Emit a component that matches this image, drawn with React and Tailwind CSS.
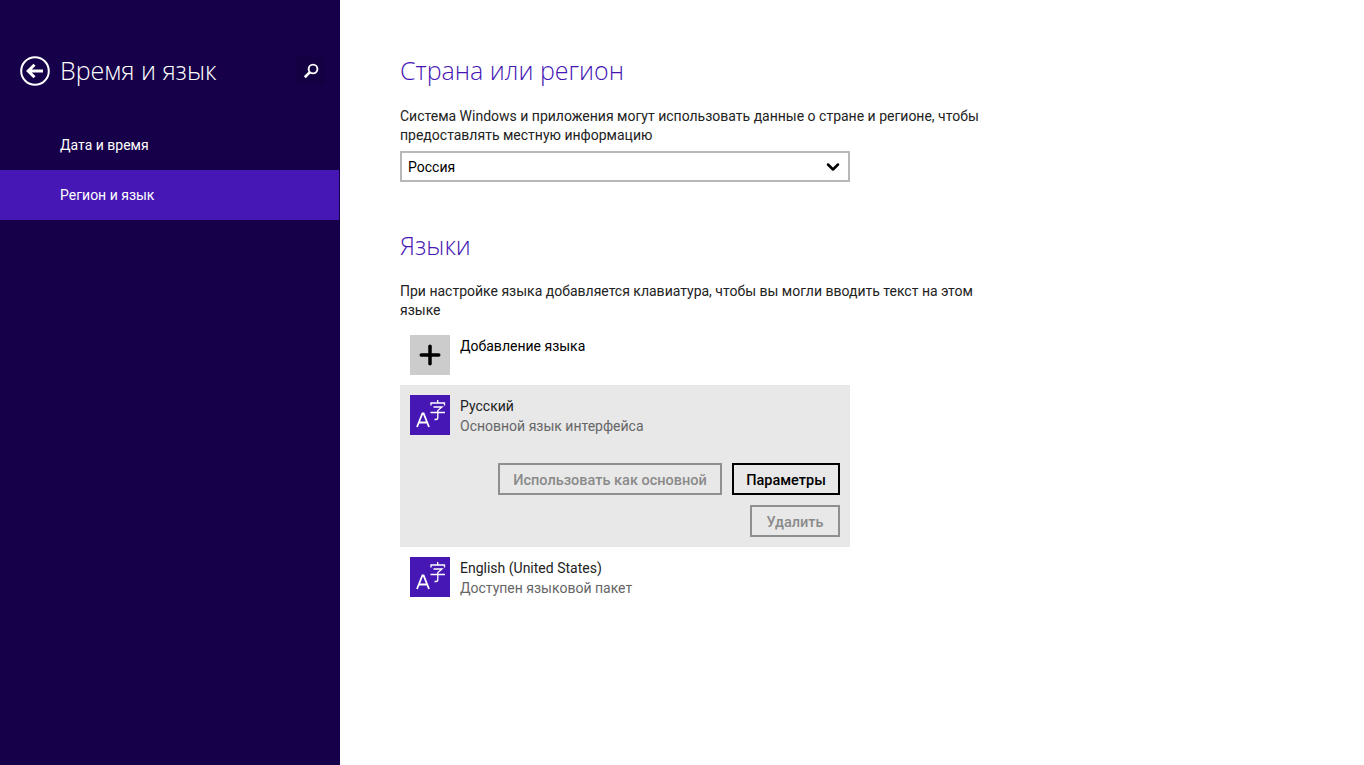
import { Plus, ChevronDown } from 'lucide-react'

function LangIcon() {
  return (
    <div className="relative h-10 w-10 shrink-0 bg-[#4617b4] text-white">
      <svg viewBox="0 0 40 40" className="h-10 w-10" fill="none" stroke="white" strokeWidth="1.3">
        <path d="M7 32 L12.4 18.5 L13.6 18.5 L19 32 M8.8 27.5 H17.2" strokeWidth="1.8" />
        <path d="M21 10.5 V8 H34.5 V10.5 M27.7 5 V8 M23.5 12 H32 L27.8 15.5 V22.5 Q27.8 24.5 26 24.5 H24.5 M20.5 17.5 H35" />
      </svg>
    </div>
  )
}

function LangRow({ name, sub }) {
  return (
    <div className="flex h-10 gap-2.5">
      <LangIcon />
      <div className="mt-px text-[14px] leading-[20px]">
        <p className="text-[#222]">{name}</p>
        <p className="text-[#666]">{sub}</p>
      </div>
    </div>
  )
}

function OutlineBtn({ children, active, className }) {
  return (
    <div
      className={
        'flex h-8 items-center justify-center border-2 pt-[3px] text-[14.5px] font-medium ' +
        (active ? 'border-black text-black ' : 'border-[#8f8f8f] text-[#8a8a8a] ') +
        className
      }
    >
      {children}
    </div>
  )
}

const headingFont = "font-['Open_Sans',sans-serif] text-[25px] leading-10 font-light"

export default function App() {
  return (
    <div className="flex h-[765px] w-[1364px] overflow-hidden bg-white font-['Roboto',sans-serif]">
      <aside className="w-[340px] shrink-0 bg-[#160049] pt-[51px] text-white">
        <div className="flex h-10 items-center pl-5 pr-[15px]">
          <svg viewBox="0 0 30 30" className="h-[30px] w-[30px] shrink-0" fill="none" stroke="white">
            <circle cx="15" cy="15" r="13.8" strokeWidth="2" />
            <path d="M23 15 H9 M14.5 8.8 L8.2 15 L14.5 21.2" strokeWidth="3" />
          </svg>
          <h1 className={'ml-[10px] -translate-y-px ' + headingFont}>Время и язык</h1>
          <div className="ml-auto flex h-7 w-7 items-center justify-center bg-[#130042]">
            <svg viewBox="0 0 16 16" className="h-[18px] w-[18px]" fill="none" stroke="white">
              <circle cx="9.8" cy="6.2" r="3.9" strokeWidth="1.7" />
              <path d="M7 9 L2.5 13.5" strokeWidth="2.4" />
            </svg>
          </div>
        </div>
        <nav className="mt-[29px] w-[339px] text-[14px]">
          <div className="flex h-[50px] items-center pl-[60px]">Дата и время</div>
          <div className="flex h-[50px] items-center bg-[#4617b4] pl-[60px]">Регион и язык</div>
        </nav>
      </aside>
      <main className="flex-1 pt-[50px] pl-[60px] text-[14px] leading-[19px] text-[#222]">
        <h2 className={headingFont + ' text-[#4617b4]'}>Страна или регион</h2>
        <p className="mt-[17px] w-[590px]">
          Система Windows и приложения могут использовать данные о стране и регионе, чтобы предоставлять местную информацию
        </p>
        <div className="mt-[6px] flex h-[31px] w-[450px] items-center justify-between border-2 border-[#b8b8b8] pt-px pr-[5px] pl-[6px] text-black">
          <span>Россия</span>
          <ChevronDown size={20} strokeWidth={3} />
        </div>
        <h2 className={'mt-[43px] ' + headingFont + ' text-[#4617b4]'}>Языки</h2>
        <p className="mt-[17px] w-[590px]">
          При настройке языка добавляется клавиатура, чтобы вы могли вводить текст на этом языке
        </p>
        <div className="mt-[15px] flex h-10 gap-2.5 pl-2.5">
          <div className="flex h-10 w-10 items-center justify-center bg-[#cccccc]">
            <Plus size={30} strokeWidth={2.8} className="text-black" />
          </div>
          <p className="mt-px leading-5 text-black">Добавление языка</p>
        </div>
        <div className="mt-2.5 h-[162px] w-[450px] bg-[#e8e8e8] p-2.5">
          <LangRow name="Русский" sub="Основной язык интерфейса" />
          <div className="mt-[28px] flex justify-end gap-2.5">
            <OutlineBtn className="w-[224px]">Использовать как основной</OutlineBtn>
            <OutlineBtn active className="w-[108px]">Параметры</OutlineBtn>
          </div>
          <div className="mt-2.5 flex justify-end">
            <OutlineBtn className="w-[90px]">Удалить</OutlineBtn>
          </div>
        </div>
        <div className="mt-2.5 pl-2.5">
          <LangRow name="English (United States)" sub="Доступен языковой пакет" />
        </div>
      </main>
    </div>
  )
}
